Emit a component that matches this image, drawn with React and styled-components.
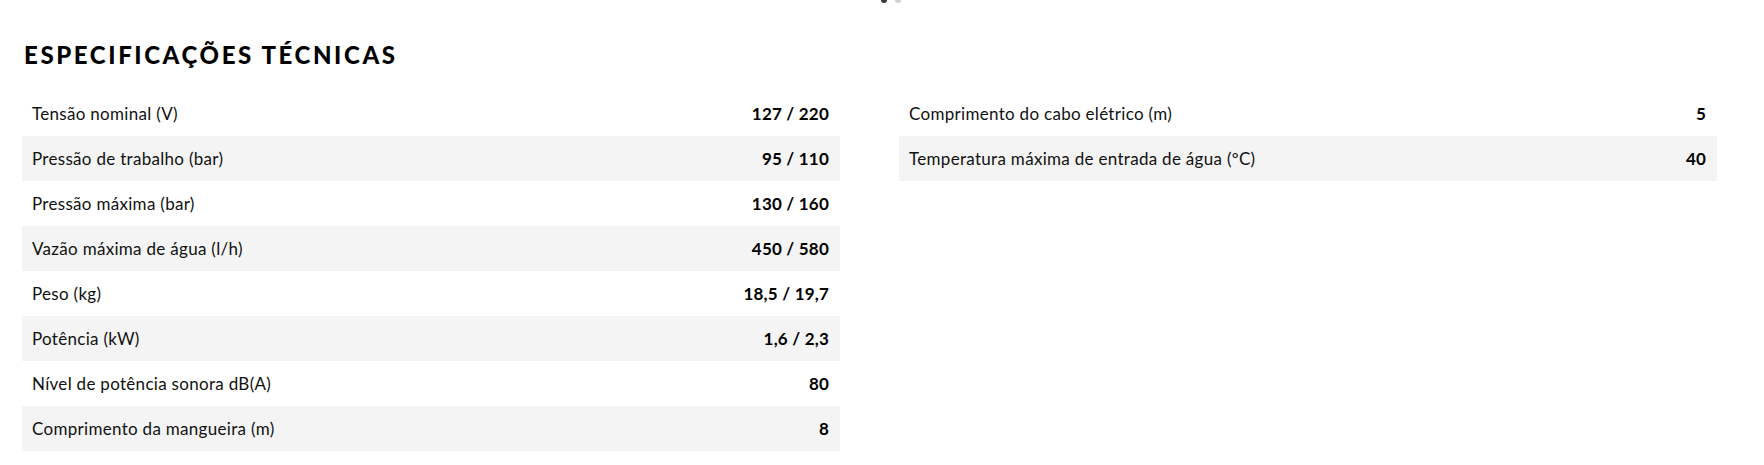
import React from "react";
import styled, { createGlobalStyle } from "styled-components";

const GlobalStyle = createGlobalStyle`
  body {
    margin: 0;
    background: #ffffff;
    color: #000000;
    font-family: "Lato", "Liberation Sans", sans-serif;
  }
`;

const leftSpecs = [
  ["Tensão nominal (V)", "127 / 220"],
  ["Pressão de trabalho (bar)", "95 / 110"],
  ["Pressão máxima (bar)", "130 / 160"],
  ["Vazão máxima de água (l/h)", "450 / 580"],
  ["Peso (kg)", "18,5 / 19,7"],
  ["Potência (kW)", "1,6 / 2,3"],
  ["Nível de potência sonora dB(A)", "80"],
  ["Comprimento da mangueira (m)", "8"],
];

const rightSpecs = [
  ["Comprimento do cabo elétrico (m)", "5"],
  ["Temperatura máxima de entrada de água (ºC)", "40"],
];

function SpecTable({ items }) {
  return (
    <Table>
      {items.map(([label, value], i) => (
        <Row key={label} $shaded={i % 2 === 1}>
          <Label>{label}</Label>
          <Value>{value}</Value>
        </Row>
      ))}
    </Table>
  );
}

export default function App() {
  return (
    <>
      <GlobalStyle />
      <Page>
        <Dots>
          <Dot $active />
          <Dot />
        </Dots>
        <Heading>Especificações técnicas</Heading>
        <Columns>
          <SpecTable items={leftSpecs} />
          <SpecTable items={rightSpecs} />
        </Columns>
      </Page>
    </>
  );
}

const Page = styled.section`
  padding: 0 22px 14px 22px;
`;
const Dots = styled.div`
  height: 4px;
  overflow: hidden;
  display: flex;
  justify-content: center;
  gap: 8px;
  padding-left: 18px;
`;
const Dot = styled.span`
  width: 6px;
  height: 6px;
  margin-top: -3px;
  border-radius: 50%;
  background: ${(p) => (p.$active ? "#3a3a3a" : "#cfcfcf")};
`;
const Heading = styled.h2`
  margin: 39px 0 24px 2px;
  font-family: "Lato", sans-serif;
  font-weight: 900;
  font-size: 24px;
  line-height: 24px;
  letter-spacing: 2.6px;
  text-transform: uppercase;
`;
const Columns = styled.div`
  display: grid;
  grid-template-columns: 818px 818px;
  column-gap: 59px;
  align-items: start;
`;
const Table = styled.div`
  display: flex;
  flex-direction: column;
`;
const Row = styled.div`
  display: flex;
  justify-content: space-between;
  align-items: center;
  height: 45px;
  padding: 0 11px 0 10px;
  background: ${(p) => (p.$shaded ? "#f4f4f4" : "transparent")};
`;
const Label = styled.span`
  font-size: 17px;
  font-weight: 400;
  line-height: 45px;
  letter-spacing: 0.3px;
  color: #111111;
`;
const Value = styled.span`
  font-size: 17px;
  font-weight: 700;
  line-height: 45px;
  letter-spacing: 0.2px;
  color: #000000;
`;
